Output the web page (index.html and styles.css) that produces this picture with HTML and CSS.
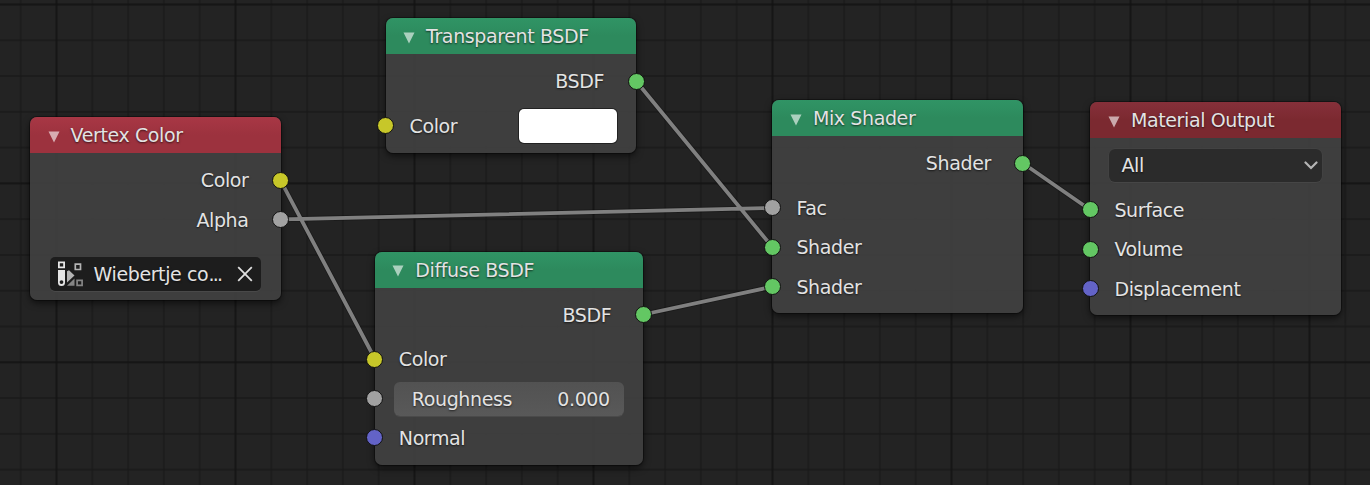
FILE: index.html
```html
<!DOCTYPE html>
<html lang="en">
<head>
<meta charset="utf-8">
<title>Shader Editor</title>
<link rel="stylesheet" href="styles.css">
</head>
<body>
<main class="canvas">
  <svg class="backdrop" width="1370" height="485" viewBox="0 0 1370 485" aria-hidden="true">
    <defs>
      <pattern id="minor" patternUnits="userSpaceOnUse" x="55.500" y="3.500" width="35.800" height="35.780">
        <path class="grid-minor" d="M0 1H35.800M1 0V35.780"/>
      </pattern>
      <pattern id="major" patternUnits="userSpaceOnUse" x="55.500" y="3.500" width="179" height="178.900">
        <path class="grid-major" d="M0 1H179M1 0V178.900"/>
      </pattern>
    </defs>
    <rect width="1370" height="485" fill="url(#minor)"/>
    <rect width="1370" height="485" fill="url(#major)"/>
    <g class="link-edge">
      <path d="M280.500 180.300L375 359M281 219.300L772.500 208M636 81L772.500 247.300M643.500 314.500L772.500 286.600M1023 163.300L1090.500 210"/>
    </g>
    <g class="link">
      <path d="M280.500 180.300L375 359M281 219.300L772.500 208M636 81L772.500 247.300M643.500 314.500L772.500 286.600M1023 163.300L1090.500 210"/>
    </g>
  </svg>

  <section class="node vertex">
    <header class="head input-head"><svg class="tri" viewBox="0 0 12 12"><path d="M.5.5h11L6 11.500z"/></svg><span>Vertex Color</span></header>
    <div class="body">
      <div class="row out">Color<i class="socket yellow"></i></div>
      <div class="row out">Alpha<i class="socket gray"></i></div>
      <div class="row layer-row">
        <div class="layer">
          <svg class="layer-icon" width="28" height="28" viewBox="0 0 28 28">
            <path fill="none" stroke="#e6e6e6" stroke-width="1.800" d="M1.900 2.400h5.200v5H1.900z"/>
            <path fill="none" stroke="#b4b4b4" stroke-width="1.700" d="M18.300 4.100h5.200v5.400h-5.200z"/>
            <path fill="none" stroke="#858585" stroke-width="1.700" d="M20.100 20.300h5v5h-5z"/>
            <path fill="#e6e6e6" fill-rule="evenodd" d="M1 10h7v12.500a3.500 3.500 0 0 1-7 0zM4.500 20.200a1.900 1.900 0 1 0 0 3.800 1.900 1.900 0 0 0 0-3.800z"/>
            <path fill="#b4b4b4" d="M10 11.200 12 10.200l5.500 5.300-7.500 7z"/>
            <path fill="#858585" d="M10 25.800l7.500-7.300v7.300z"/>
          </svg>
          <span class="layer-name">Wiebertje co<span class="dots">...</span></span>
          <svg class="clear" width="16" height="16" viewBox="0 0 16 16"><path d="M1.200 1.200l13.600 13.600M14.800 1.200l-13.600 13.600"/></svg>
        </div>
      </div>
    </div>
  </section>

  <section class="node transparent">
    <header class="head shader-head"><svg class="tri" viewBox="0 0 12 12"><path d="M.5.5h11L6 11.500z"/></svg><span>Transparent BSDF</span></header>
    <div class="body">
      <div class="row out">BSDF<i class="socket green"></i></div>
      <div class="row in first">Color<i class="socket yellow"></i><b class="swatch"></b></div>
    </div>
  </section>

  <section class="node diffuse">
    <header class="head shader-head"><svg class="tri" viewBox="0 0 12 12"><path d="M.5.5h11L6 11.500z"/></svg><span>Diffuse BSDF</span></header>
    <div class="body">
      <div class="row out">BSDF<i class="socket green"></i></div>
      <div class="row in first">Color<i class="socket yellow"></i></div>
      <div class="row field-row"><i class="socket gray"></i><div class="slider"><span>Roughness</span><span>0.000</span></div></div>
      <div class="row in">Normal<i class="socket blue"></i></div>
    </div>
  </section>

  <section class="node mix">
    <header class="head shader-head"><svg class="tri" viewBox="0 0 12 12"><path d="M.5.5h11L6 11.500z"/></svg><span>Mix Shader</span></header>
    <div class="body">
      <div class="row out">Shader<i class="socket green"></i></div>
      <div class="row in first">Fac<i class="socket gray"></i></div>
      <div class="row in">Shader<i class="socket green"></i></div>
      <div class="row in">Shader<i class="socket green"></i></div>
    </div>
  </section>

  <section class="node output">
    <header class="head output-head"><svg class="tri" viewBox="0 0 12 12"><path d="M.5.5h11L6 11.500z"/></svg><span>Material Output</span></header>
    <div class="body">
      <div class="row field-row"><div class="select"><span>All</span><svg width="14" height="9" viewBox="0 0 14 9"><path d="M1.500 1.500 7 7l5.500-5.500"/></svg></div></div>
      <div class="row in first">Surface<i class="socket green"></i></div>
      <div class="row in">Volume<i class="socket green"></i></div>
      <div class="row in">Displacement<i class="socket blue"></i></div>
    </div>
  </section>
</main>
</body>
</html>
```
FILE: styles.css
```css
* { box-sizing: border-box; }
body { margin: 0; background: #232323; }

.canvas {
  position: relative;
  width: 1370px;
  height: 485px;
  overflow: hidden;
  background: #232323;
  color: #e3e3e3;
  font: 19px/24px "DejaVu Sans", sans-serif;
  letter-spacing: -.38px;
  text-shadow: 0 1px 2px rgba(0, 0, 0, .65);
  white-space: nowrap;
}
.backdrop { display: block; }
.grid-minor { fill: none; stroke: #191919; stroke-width: 1.300; }
.grid-major { fill: none; stroke: #101010; stroke-width: 1.100; }
.link-edge { fill: none; stroke: rgba(0, 0, 0, .25); stroke-width: 5.500; }
.link { fill: none; stroke: #808080; stroke-width: 3.800; }

/* Nodes sit freely on the canvas */
.node {
  position: absolute;
  width: 250.500px;
  border-radius: 7px;
  background: rgba(63, 63, 63, .97);
  box-shadow: 0 0 0 1px rgba(0, 0, 0, .35), 0 3px 7px rgba(0, 0, 0, .6);
}
.vertex { left: 30px; top: 117.300px; height: 182.700px; }
.transparent { left: 385.500px; top: 18.200px; height: 135px; }
.diffuse { left: 374.800px; top: 251.700px; width: 268.500px; height: 213px; }
.mix { left: 772.400px; top: 100.400px; height: 213px; }
.output { left: 1090.400px; top: 102.400px; height: 213px; }

.head {
  display: flex;
  align-items: center;
  gap: 11px;
  height: 36px;
  padding-left: 17.500px;
  border-radius: 7px 7px 0 0;
}
.tri { width: 12px; height: 12px; margin-top: 3px; fill: rgba(255, 255, 255, .6); }
.input-head { background: linear-gradient(#a83745, #9c323e 50%); }
.shader-head { background: linear-gradient(#309465, #2d8a5d 50%); }
.output-head { background: linear-gradient(#86303a, #7b2930 50%); }

.body { padding-top: 7.400px; }
.row {
  position: relative;
  display: flex;
  align-items: center;
  height: 39.300px;
}
.out { justify-content: flex-end; padding-right: 32px; }
.in { padding: 0 19.500px 0 24px; }
.first { margin-top: 5.200px; }
.field-row { padding: 0 19px; }

.socket {
  position: absolute;
  top: 50%;
  width: 17px;
  height: 17px;
  margin-top: -8.500px;
  border: 1px solid #111;
  border-radius: 50%;
}
.in .socket, .field-row .socket { left: -8.500px; }
.out .socket { right: -8.500px; }
.yellow { background: #c7c729; }
.gray { background: #a1a1a1; }
.green { background: #63c763; }
.blue { background: #6363c7; }

.layer-row { margin-top: 15px; padding: 0 19.500px; }
.layer {
  display: flex;
  align-items: center;
  width: 100%;
  height: 34px;
  padding: 0 8px 0 7px;
  border-radius: 5px;
  background: #1d1d1d;
  box-shadow: 0 1px 0 #494949;
}
.layer-icon { flex: none; margin-right: 9px; }
.layer-name { flex: 1; }
.dots { letter-spacing: -1.700px; }
.clear { flex: none; fill: none; stroke: #e0e0e0; stroke-width: 1.800; }

.swatch {
  width: 98px;
  height: 34px;
  margin-left: auto;
  border-radius: 5px;
  background: #fff;
  box-shadow: 0 0 0 1px #222;
}
.slider, .select {
  display: flex;
  align-items: center;
  justify-content: space-between;
  width: 100%;
  height: 34px;
  border-radius: 6px;
}
.slider {
  padding: 0 14.500px 0 18px;
  background: linear-gradient(#525252, #595959);
  box-shadow: 0 1px 0 #4a4a4a;
}
.select {
  height: 33px;
  padding: 0 4px 0 12px;
  background: #2b2b2b;
  box-shadow: 0 0 0 .5px #464646, 0 1px 0 #464646;
}
.select svg { fill: none; stroke: #b5b5b5; stroke-width: 2.200; stroke-linecap: round; }
```
